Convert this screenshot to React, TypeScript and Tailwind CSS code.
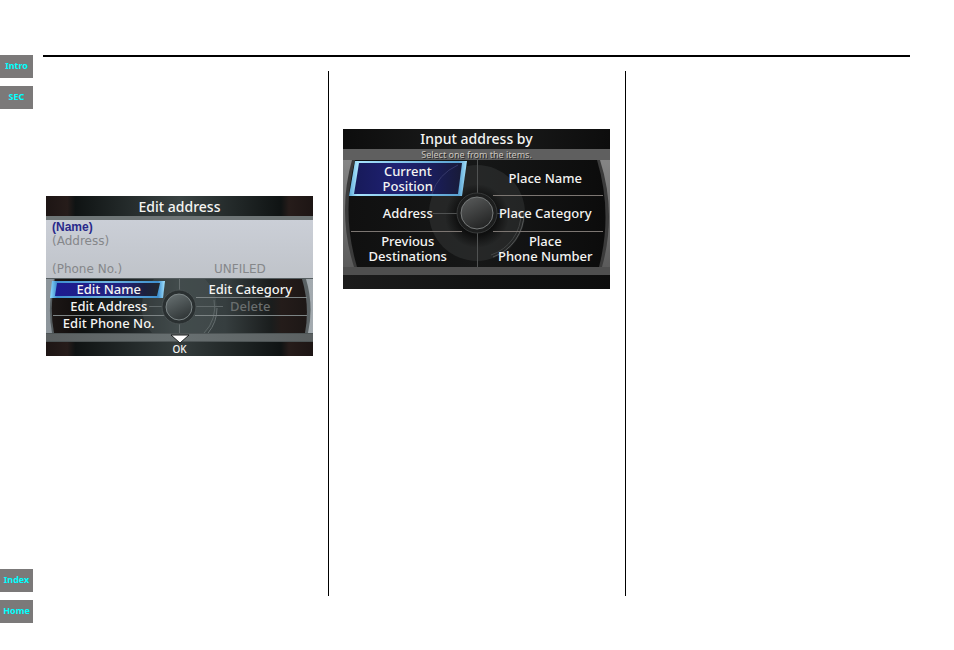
interface NavLink {
  label: string;
  href: string;
}

interface MenuItem {
  label: string;
  disabled?: boolean;
}

const topLinks: NavLink[] = [
  { label: "Intro", href: "#intro" },
  { label: "SEC", href: "#sec" },
];

const bottomLinks: NavLink[] = [
  { label: "Index", href: "#index" },
  { label: "Home", href: "#home" },
];

const editItems: MenuItem[] = [
  { label: "Edit Name" },
  { label: "Edit Category" },
  { label: "Edit Address" },
  { label: "Delete", disabled: true },
  { label: "Edit Phone No." },
];

const inputItems: MenuItem[] = [
  { label: "Current\nPosition" },
  { label: "Place Name" },
  { label: "Address" },
  { label: "Place Category" },
  { label: "Previous\nDestinations" },
  { label: "Place\nPhone Number" },
];

const NavGroup = ({ links }: { links: NavLink[] }) => (
  <div className="flex flex-col gap-2">
    {links.map((link) => (
      <a
        key={link.label}
        href={link.href}
        className="flex h-[23px] items-center justify-center bg-[#7b7979] pb-[3px] text-[9px] leading-none font-bold text-[#00ffff]"
      >
        {link.label}
      </a>
    ))}
  </div>
);

const MenuButton = ({ item, side }: { item: MenuItem; side: string }) => (
  <button
    type="button"
    disabled={item.disabled}
    className={`text-center text-[13px] leading-[15px] font-medium whitespace-pre ${side} ${
      item.disabled ? "text-[#6a6e6e]" : "text-[#f4f4f2]"
    }`}
  >
    {item.label}
  </button>
);

// Short dial with three rows
const EditDial = () => (
  <svg
    viewBox="0 0 267 55"
    preserveAspectRatio="none"
    className="absolute inset-0 h-full w-full"
    aria-hidden="true"
  >
    <defs>
      <linearGradient id="editRim" x1="0" x2="1" y1="0" y2="0">
        <stop offset="0" stopColor="#8e969c" />
        <stop offset="0.5" stopColor="#5d6667" />
        <stop offset="1" stopColor="#a4abb0" />
      </linearGradient>
      <linearGradient id="editFace" x1="0" x2="1" y1="0" y2="0">
        <stop offset="0" stopColor="#1c1716" />
        <stop offset="0.08" stopColor="#14100f" />
        <stop offset="0.12" stopColor="#0e1111" />
        <stop offset="0.3" stopColor="#1e2324" />
        <stop offset="0.5" stopColor="#3a4344" />
        <stop offset="0.68" stopColor="#363e3f" />
        <stop offset="0.86" stopColor="#1a1d1d" />
        <stop offset="0.9" stopColor="#241c1a" />
        <stop offset="1" stopColor="#1d1716" />
      </linearGradient>
      <linearGradient id="editGlow" x1="0" x2="1" y1="0" y2="0">
        <stop offset="0" stopColor="#8fdcff" />
        <stop offset="0.06" stopColor="#3f8fcf" />
        <stop offset="0.5" stopColor="#6fb4e0" />
        <stop offset="0.94" stopColor="#3f8fcf" />
        <stop offset="1" stopColor="#a5e4ff" />
      </linearGradient>
      <linearGradient id="editBlue" x1="0" x2="1" y1="0" y2="0">
        <stop offset="0" stopColor="#1d1c91" />
        <stop offset="0.65" stopColor="#22237c" />
        <stop offset="0.85" stopColor="#1c2040" />
        <stop offset="1" stopColor="#22282f" />
      </linearGradient>
      <linearGradient id="editKnob" x1="0" x2="0.5" y1="0" y2="1">
        <stop offset="0" stopColor="#6a7374" />
        <stop offset="1" stopColor="#33393a" />
      </linearGradient>
    </defs>
    <rect width="267" height="55" fill="url(#editRim)" />
    <rect width="267" height="1" fill="#555d60" />
    <path d="M8 1 Q1 28 6 55 H262 Q268 28 260 1 Z" fill="#3c4345" opacity="0.7" />
    <path d="M9 1 Q3 28 8 55 H259 Q264 28 256 1 Z" fill="url(#editFace)" />
    <path
      d="M108 1 A38 38 0 0 0 106 55 H160 A38 38 0 0 0 159 1 Z"
      fill="#56605f"
      opacity="0.3"
    />
    <path d="M168 22 A36 36 0 0 1 158 55" fill="none" stroke="#5d6667" strokeWidth="1" />
    <path d="M171 30 A39 39 0 0 1 162 55" fill="none" stroke="#687172" strokeWidth="1" />
    <g stroke="#7d8485" strokeWidth="1">
      <path d="M133.500 1 V55" stroke="#666e6f" />
      <path d="M150 19.500 H261" />
      <path d="M149 37.500 H261" />
      <path d="M7 37.500 H119" />
      <path d="M103 28.500 H117 M149 28.500 H177" stroke="#606869" />
    </g>
    <path d="M6 3 H119 L117 20 H4 Z" fill="url(#editGlow)" />
    <path d="M11 5 H114 L111 18 H9 Z" fill="url(#editBlue)" />
    <circle cx="133" cy="29" r="17" fill="#2a3031" stroke="#495152" />
    <circle cx="133" cy="29" r="13" fill="url(#editKnob)" stroke="#7d8687" />
  </svg>
);

// Full height dial with three rows
const InputDial = () => (
  <svg
    viewBox="0 0 267 107"
    preserveAspectRatio="none"
    className="absolute inset-0 h-full w-full"
    aria-hidden="true"
  >
    <defs>
      <linearGradient id="inputRim" x1="0" x2="0" y1="0" y2="1">
        <stop offset="0" stopColor="#858585" />
        <stop offset="1" stopColor="#5b5b5b" />
      </linearGradient>
      <linearGradient id="inputFace" x1="0" x2="1" y1="0" y2="0">
        <stop offset="0" stopColor="#101010" />
        <stop offset="0.5" stopColor="#161717" />
        <stop offset="1" stopColor="#0c0c0c" />
      </linearGradient>
      <radialGradient id="inputShade" cx="0.5" cy="0.5" r="0.5">
        <stop offset="0.6" stopColor="#050505" />
        <stop offset="1" stopColor="#050505" stopOpacity="0" />
      </radialGradient>
      <linearGradient id="inputGlow" x1="0" x2="1" y1="0" y2="0">
        <stop offset="0" stopColor="#5da9d8" />
        <stop offset="0.07" stopColor="#a6e2fb" />
        <stop offset="0.5" stopColor="#7fc0e6" />
        <stop offset="0.93" stopColor="#5aa3d3" />
        <stop offset="1" stopColor="#a6e2fb" />
      </linearGradient>
      <linearGradient id="inputBlue" x1="0" x2="1" y1="0" y2="0">
        <stop offset="0" stopColor="#171a59" />
        <stop offset="0.4" stopColor="#1f2173" />
        <stop offset="0.75" stopColor="#1a1d58" />
        <stop offset="1" stopColor="#181b38" />
      </linearGradient>
      <linearGradient id="inputKnob" x1="0" x2="0.5" y1="0" y2="1">
        <stop offset="0" stopColor="#5c5e5e" />
        <stop offset="1" stopColor="#262727" />
      </linearGradient>
    </defs>
    <rect width="267" height="107" fill="url(#inputRim)" />
    <path d="M9 0 Q-6 53 11 107 H259 Q274 53 257 0 Z" fill="#3b3b3b" />
    <path d="M12 0 Q-2 53 14 107 H256 Q270 53 254 0 Z" fill="url(#inputFace)" />
    <circle cx="134" cy="53" r="48" fill="#3a3b3b" opacity="0.45" />
    <circle cx="134" cy="56" r="32" fill="url(#inputShade)" opacity="0.7" />
    <path d="M181 53 A47 47 0 0 1 150 97" fill="none" stroke="#565858" strokeWidth="1" />
    <path d="M178 53 A44 44 0 0 1 148 95" fill="none" stroke="#424444" strokeWidth="1" />
    <g stroke="#7c7672" strokeWidth="1">
      <path d="M134.500 0 V107" stroke="#505252" />
      <path d="M150 35.500 H260" />
      <path d="M150 71.500 H260" />
      <path d="M8 71.500 H119" />
      <path d="M90 53.500 H116 M151 53.500 H160" stroke="#505252" />
    </g>
    <path d="M12 1 H124 L119 36 H6 Z" fill="url(#inputGlow)" />
    <path d="M16 3 H119 L115 34 H11 Z" fill="url(#inputBlue)" />
    <path d="M89 34 Q95 14 115 5" fill="none" stroke="#35386a" strokeWidth="1" />
    <circle cx="134" cy="53" r="20" fill="#1d1e1e" stroke="#373939" />
    <circle cx="134" cy="53" r="16" fill="url(#inputKnob)" stroke="#777a7a" />
  </svg>
);

const EditAddressScreen = () => (
  <section className="overflow-hidden">
    <h2 className="h-5 bg-[linear-gradient(90deg,#1d1514_0%,#261c1a_8%,#0f1313_11%,#394242_50%,#0f1313_88%,#261c1a_91%,#1d1514_100%)] text-center text-[14px] leading-[22px] font-medium text-[#f4f4f2]">
      Edit address
    </h2>
    <div className="h-1 bg-[#6f7677]" />
    <div className="grid h-[58px] grid-cols-[162fr_99fr] grid-rows-[14px_14px_14px_14px] bg-linear-to-b from-[#cbcfd7] to-[#bfc3c9] pl-[6px] font-['DejaVu_Sans',sans-serif] text-[12px] leading-[14px] text-[#85878a]">
      <p className="col-span-2 font-['Liberation_Sans',sans-serif] font-bold text-[#29298a]">
        (Name)
      </p>
      <p className="col-span-2">(Address)</p>
      <p className="row-start-4">(Phone No.)</p>
      <p className="row-start-4">UNFILED</p>
    </div>
    <div className="relative h-[55px] pt-[3px]">
      <EditDial />
      <div className="relative grid grid-cols-2 auto-rows-[17px]">
        {editItems.map((item, i) => (
          <MenuButton key={item.label} item={item} side={i % 2 === 0 ? "pr-2" : "pl-2"} />
        ))}
      </div>
    </div>
    <div className="h-[9px] border-y border-[#4d5455] bg-linear-to-r from-[#5b6061] via-[#687071] to-[#5b6061]" />
    <div className="relative h-[14px] bg-[linear-gradient(90deg,#1d1514_0%,#261c1a_8%,#0f1313_11%,#343c3c_50%,#0f1313_88%,#261c1a_91%,#1d1514_100%)]">
      <svg
        viewBox="0 0 20 10"
        className="absolute -top-2 left-1/2 h-[10px] w-5 -translate-x-1/2"
        aria-hidden="true"
      >
        <path d="M1 1 H19 L10 9 Z" fill="#ffffff" stroke="#1a1d1d" strokeWidth="1" />
      </svg>
      <button
        type="button"
        className="block w-full text-center text-[10px] leading-[14px] font-medium text-[#f4f4f2]"
      >
        OK
      </button>
    </div>
  </section>
);

const InputAddressScreen = () => (
  <section className="overflow-hidden">
    <h2 className="h-5 bg-linear-to-r from-[#0d0d0d] via-[#1c1d1d] to-[#0d0d0d] text-center text-[14px] leading-5 font-medium text-[#f4f4f2]">
      Input address by
    </h2>
    <p className="h-[11px] bg-[#5f5f5f] text-center text-[9px] leading-[11px] text-[#c9c4be] [text-shadow:1px_1px_0_#2a2a2a]">
      Select one from the items.
    </p>
    <div className="relative h-[107px]">
      <InputDial />
      <div className="relative grid h-full grid-cols-2 grid-rows-3 pt-px">
        {inputItems.map((item, i) => (
          <MenuButton key={item.label} item={item} side={i % 2 === 0 ? "pr-1" : "pl-1"} />
        ))}
      </div>
    </div>
    <div className="h-2 bg-[#4f4f4f]" />
    <div className="h-[14px] bg-linear-to-r from-[#1c1c1c] via-[#131414] to-[#0d0d0d]" />
  </section>
);

export default function App() {
  return (
    <div className="flex min-h-screen bg-white font-['Noto_Sans',sans-serif]">
      <nav className="flex w-[33px] shrink-0 flex-col justify-between pt-[55px] pb-[27px]">
        <NavGroup links={topLinks} />
        <NavGroup links={bottomLinks} />
      </nav>

      <main className="mr-11 ml-[10px] flex flex-1 flex-col pt-[55px] pb-[54px]">
        <div className="h-[2px] bg-black" />
        <div className="mt-[14px] grid flex-1 grid-cols-[286fr_297fr_284fr]">
          <div className="border-r border-black pt-[125px] pr-[15px] pl-[3px]">
            <EditAddressScreen />
          </div>
          <div className="border-r border-black pt-[58px] pr-[15px] pl-[14px]">
            <InputAddressScreen />
          </div>
          <div />
        </div>
      </main>
    </div>
  );
}
